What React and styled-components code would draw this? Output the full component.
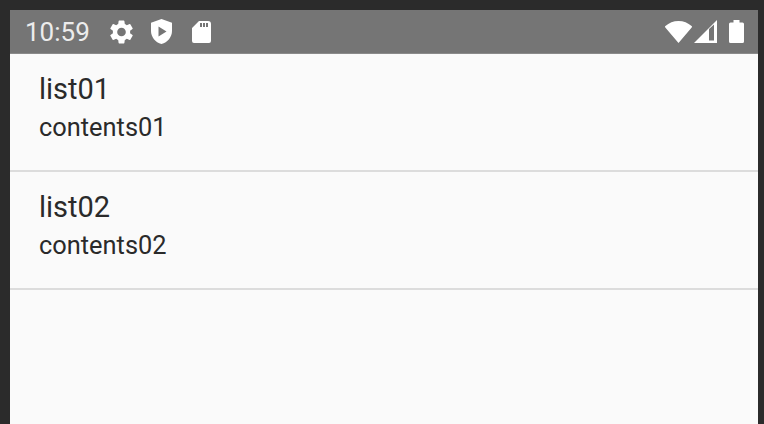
import React from 'react'
import styled, { createGlobalStyle } from 'styled-components'

const GlobalStyle = createGlobalStyle`
  html, body {
    margin: 0;
    padding: 0;
    height: 424px;
    overflow: hidden;
    background: #2b2b2b;
  }
`

const items = [
  { title: 'list01', text: 'contents01' },
  { title: 'list02', text: 'contents02' },
]

const App = () => {
  return (
    <>
      <GlobalStyle />
      <Frame>
        <Screen>
          <StatusBar>
            <Time>10:59</Time>
            <LeftIcons>
              <IconSlot>
                <svg width="23" height="24" viewBox="2.6 2 18.8 20" fill="#fff">
                  <path d="M19.14 12.94c.04-.3.06-.61.06-.94 0-.32-.02-.64-.07-.94l2.03-1.58a.49.49 0 0 0 .12-.61l-1.92-3.32a.49.49 0 0 0-.59-.22l-2.39.96c-.5-.38-1.03-.7-1.62-.94l-.36-2.54a.48.48 0 0 0-.48-.41h-3.84a.48.48 0 0 0-.47.41l-.36 2.54c-.59.24-1.13.57-1.62.94l-2.39-.96a.48.48 0 0 0-.59.22L2.74 8.87a.47.47 0 0 0 .12.61l2.03 1.58c-.05.3-.09.63-.09.94s.02.64.07.94l-2.03 1.58a.49.49 0 0 0-.12.61l1.92 3.32c.12.22.37.29.59.22l2.39-.96c.5.38 1.03.7 1.62.94l.36 2.54c.05.24.24.41.48.41h3.84c.24 0 .44-.17.47-.41l.36-2.54c.59-.24 1.13-.56 1.62-.94l2.39.96c.22.08.47 0 .59-.22l1.92-3.32a.47.47 0 0 0-.12-.61l-2.01-1.58zM12 15.6a3.6 3.6 0 1 1 0-7.200 3.600 3.600 0 0 1 0 7.200z" />
                </svg>
              </IconSlot>
              <IconSlot>
                <svg width="21" height="25" viewBox="0 0 21 25" fill="#fff">
                  <path fillRule="evenodd" d="M10.500 0 0 3.800v8.200C0 18 4.400 23.400 10.500 25 16.600 23.400 21 18 21 12V3.800L10.500 0zM7.500 7.500l8 5-8 5v-10z" />
                </svg>
              </IconSlot>
              <IconSlot>
                <svg width="19" height="22" viewBox="0 0 19 22" fill="#fff">
                  <path fillRule="evenodd" d="M7 0h9a3 3 0 0 1 3 3v17a2 2 0 0 1-2 2H2a2 2 0 0 1-2-2V7L7 0zM8 2v4h2V2H8zm3 0v4h2V2h-2zm3 0v4h2V2h-2z" />
                </svg>
              </IconSlot>
            </LeftIcons>
            <RightIcons>
              <svg width="27" height="23" viewBox="0 0 27 23" fill="#fff">
                <path d="M13.500 23 .3 7.500a1 1 0 0 1 .1-1.400C4 2.800 8.500 1 13.500 1s9.500 1.800 13.100 5.100a1 1 0 0 1 .1 1.400L13.500 23z" />
              </svg>
              <svg width="23" height="23" viewBox="0 0 23 23" fill="#fff">
                <path fillRule="evenodd" d="M0 23 23 0v23H0zM15 9v11.500h5V4.500L15 9z" />
              </svg>
              <svg width="15" height="23" viewBox="0 0 15 23" fill="#fff">
                <path d="M4.500 0h6v2.500h3a1.500 1.500 0 0 1 1.500 1.500v17.500a1.500 1.500 0 0 1-1.500 1.500h-12A1.500 1.500 0 0 1 0 21.500V4a1.500 1.500 0 0 1 1.500-1.500h3V0z" />
              </svg>
            </RightIcons>
          </StatusBar>
          <List>
            {items.map((item) => (
              <Row key={item.title}>
                <Title>{item.title}</Title>
                <Text>{item.text}</Text>
              </Row>
            ))}
          </List>
        </Screen>
      </Frame>
    </>
  )
}

const Frame = styled.div`
  box-sizing: border-box;
  width: 764px;
  height: 424px;
  padding: 10px 6px 0 10px;
  background: #2b2b2b;
  font-family: Roboto, sans-serif;
`
const Screen = styled.div`
  height: 100%;
  display: flex;
  flex-direction: column;
  background: #fafafa;
`
const StatusBar = styled.div`
  box-sizing: border-box;
  height: 44px;
  flex-shrink: 0;
  display: flex;
  align-items: center;
  padding: 0 14px 0 15px;
  background: #757575;
  border-bottom: 1px solid #8a8a8a;
`
const Time = styled.span`
  width: 76px;
  font-size: 26px;
  font-weight: 400;
  color: #ececec;
`
const LeftIcons = styled.div`
  display: flex;
  align-items: center;
`
const IconSlot = styled.div`
  width: 40px;
  display: flex;
  justify-content: center;
  svg {
    display: block;
  }
`
const RightIcons = styled.div`
  display: flex;
  align-items: center;
  gap: 2px;
  margin-left: auto;
  svg {
    display: block;
  }
  svg:last-child {
    margin-left: 10px;
  }
`
const List = styled.div`
  display: flex;
  flex-direction: column;
`
const Row = styled.div`
  box-sizing: border-box;
  height: 118px;
  padding: 18px 29px 0;
  border-bottom: 2px solid #dcdcdc;
  color: #2a2a2a;
`
const Title = styled.div`
  font-size: 29px;
  line-height: 35px;
`
const Text = styled.div`
  font-size: 25.4px;
  line-height: 40px;
`

export default App
